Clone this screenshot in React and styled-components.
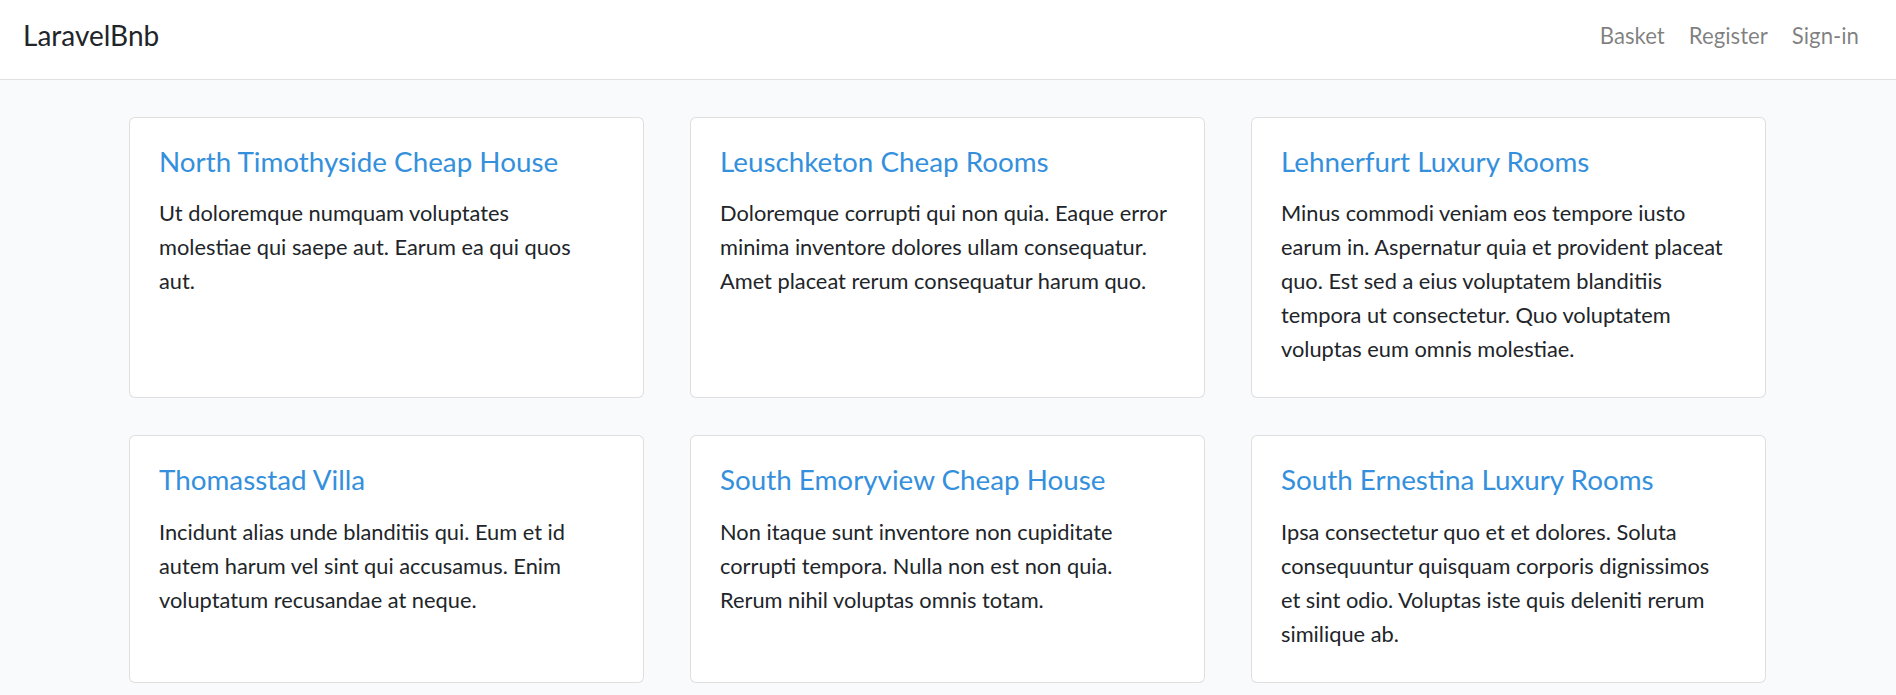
import React from 'react'
import styled, { createGlobalStyle } from 'styled-components'

const GlobalStyle = createGlobalStyle`
  * { box-sizing: border-box; }
  body {
    margin: 0;
    background: #f8fafc;
    color: #212529;
    font-family: Lato, "Open Sans", sans-serif;
  }
`

const places = [
  {
    title: 'North Timothyside Cheap House',
    lines: ['Ut doloremque numquam voluptates', 'molestiae qui saepe aut. Earum ea qui quos', 'aut.'],
  },
  {
    title: 'Leuschketon Cheap Rooms',
    lines: ['Doloremque corrupti qui non quia. Eaque error', 'minima inventore dolores ullam consequatur.', 'Amet placeat rerum consequatur harum quo.'],
  },
  {
    title: 'Lehnerfurt Luxury Rooms',
    lines: [
      'Minus commodi veniam eos tempore iusto',
      'earum in. Aspernatur quia et provident placeat',
      'quo. Est sed a eius voluptatem blanditiis',
      'tempora ut consectetur. Quo voluptatem',
      'voluptas eum omnis molestiae.',
    ],
  },
  {
    title: 'Thomasstad Villa',
    lines: ['Incidunt alias unde blanditiis qui. Eum et id', 'autem harum vel sint qui accusamus. Enim', 'voluptatum recusandae at neque.'],
  },
  {
    title: 'South Emoryview Cheap House',
    lines: ['Non itaque sunt inventore non cupiditate', 'corrupti tempora. Nulla non est non quia.', 'Rerum nihil voluptas omnis totam.'],
  },
  {
    title: 'South Ernestina Luxury Rooms',
    lines: [
      'Ipsa consectetur quo et et dolores. Soluta',
      'consequuntur quisquam corporis dignissimos',
      'et sint odio. Voluptas iste quis deleniti rerum',
      'similique ab.',
    ],
  },
]

const Navbar = styled.nav`
  display: flex;
  align-items: center;
  justify-content: space-between;
  height: 80px;
  padding: 0 25px 7px 23px;
  background: #fff;
  border-bottom: 1px solid #dfe0e1;
`

const Brand = styled.a`
  font-size: 28px;
  line-height: 1.2;
  color: #212529;
  text-decoration: none;
`

const NavLinks = styled.ul`
  display: flex;
  margin: 0;
  padding: 0;
  list-style: none;
`

const NavLink = styled.a`
  display: block;
  padding: 0 12px;
  font-size: 22.2px;
  line-height: 1.2;
  color: rgba(0, 0, 0, 0.5);
  text-decoration: none;
`

const Main = styled.main`
  padding: 37px 0 0 129px;
`

const Grid = styled.div`
  display: grid;
  grid-template-columns: repeat(3, 515px);
  column-gap: 46px;
  row-gap: 37px;
`

const Card = styled.div`
  background: #fff;
  border: 1px solid rgba(0, 0, 0, 0.125);
  border-radius: 6px;
  padding: 27px 29px 31px 29px;
`

const Title = styled.h5`
  margin: 0 0 18px;
  font-size: 27.8px;
  font-weight: 400;
  line-height: 1.2;
  color: #3490dc;
`

const Text = styled.p`
  margin: 0;
  font-size: 21.8px;
  line-height: 34px;
  white-space: nowrap;
`

export default function App() {
  return (
    <>
      <GlobalStyle />
      <Navbar>
        <Brand href="#">LaravelBnb</Brand>
        <NavLinks>
          {['Basket', 'Register', 'Sign-in'].map((label) => (
            <li key={label}>
              <NavLink href="#">{label}</NavLink>
            </li>
          ))}
        </NavLinks>
      </Navbar>
      <Main>
        <Grid>
          {places.map((place) => (
            <Card key={place.title}>
              <Title>{place.title}</Title>
              <Text>
                {place.lines.map((line, i) => (
                  <React.Fragment key={i}>
                    {i > 0 && <br />}
                    {line}
                  </React.Fragment>
                ))}
              </Text>
            </Card>
          ))}
        </Grid>
      </Main>
    </>
  )
}
